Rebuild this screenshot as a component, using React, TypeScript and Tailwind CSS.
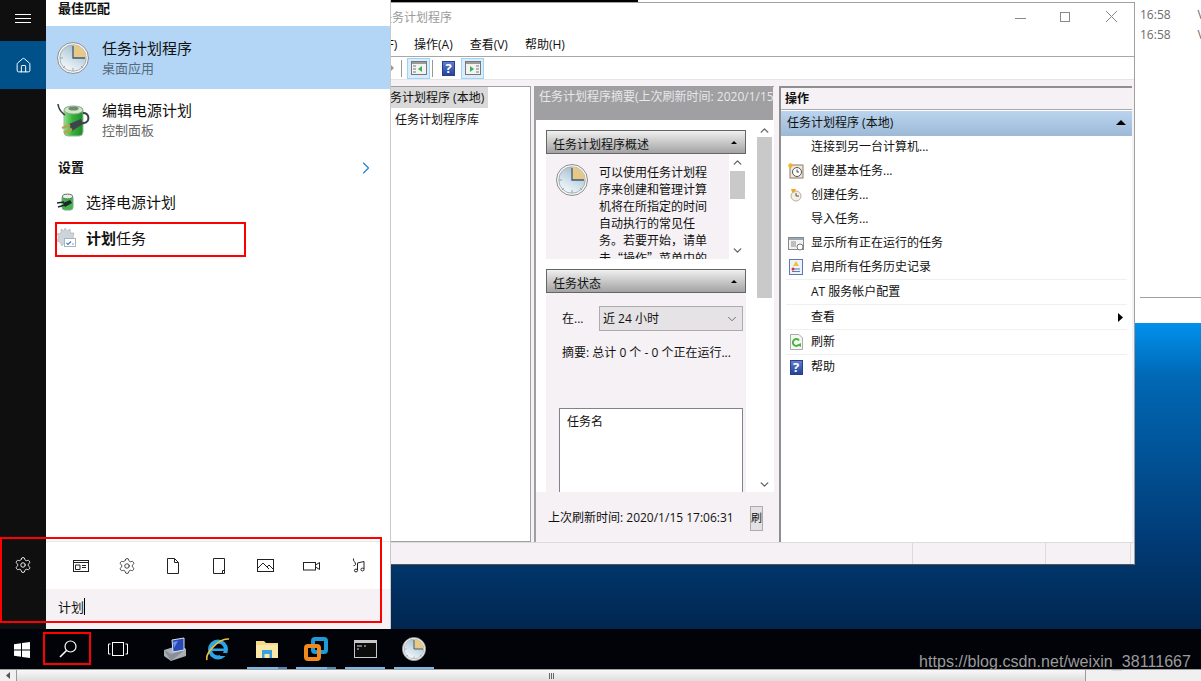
import { Settings, Home, ChevronRight, ChevronUp, ChevronDown } from "lucide-react"

const FONT = "font-['Open_Sans','Noto_Sans_CJK_SC',sans-serif]"

function ClockIcon({ size = 32, id = "face" }: { size?: number; id?: string }) {
  return (
    <svg width={size} height={size} viewBox="0 0 32 32" className="shrink-0">
      <defs>
        <linearGradient id={id} x1="0.1" y1="1" x2="0.6" y2="0.1">
          <stop offset="0" stopColor="#ffffff" />
          <stop offset="0.55" stopColor="#cfdfe9" />
          <stop offset="1" stopColor="#a9c1d1" />
        </linearGradient>
      </defs>
      <circle cx="16" cy="16" r="15.5" fill="#f6f6f6" stroke="#8d8d8d" />
      <circle cx="16" cy="16" r="13.2" fill={`url(#${id})`} stroke="#a8b1b8" />
      <path d="M16 2.8 A13.2 13.2 0 0 1 29.2 16 L16 16 Z" fill="#e6c888" />
      <path d="M16 4 V16 H28" fill="none" stroke="#3d5a76" strokeWidth="1.3" />
      <path d="M16 26 V29 M6 16 H3 M8 24 L6 26 M24 24 L26 26" stroke="#8ea2b2" />
    </svg>
  )
}

function BatteryIcon() {
  return (
    <svg width="34" height="34" viewBox="0 0 34 34" className="shrink-0">
      <defs>
        <linearGradient id="batt" x1="0" y1="0" x2="1" y2="0">
          <stop offset="0" stopColor="#8fe08a" />
          <stop offset="0.45" stopColor="#35b23a" />
          <stop offset="1" stopColor="#1f8a2c" />
        </linearGradient>
      </defs>
      <rect x="7" y="4" width="19" height="29" rx="4" fill="url(#batt)" stroke="#9bb89b" />
      <ellipse cx="16.5" cy="7" rx="9.5" ry="4" fill="#cfe9c8" stroke="#8fa98f" />
      <ellipse cx="16.5" cy="5.5" rx="5" ry="2" fill="#6f8a70" />
      <path d="M1 1 C2 9 6 10 8 12" fill="none" stroke="#39434b" strokeWidth="1.6" />
      <path d="M26 10 C33 10 33 19 27 20 L22 21" fill="none" stroke="#39434b" strokeWidth="2" />
      <path d="M12 21 L24 16 L26 21 L15 28 Z" fill="#3d454b" />
      <path d="M5 25 L13 22 M7 30 L15 26" stroke="#c79a45" strokeWidth="2.4" />
    </svg>
  )
}

function SmallBattery() {
  return (
    <svg width="18" height="18" viewBox="0 0 18 18" className="shrink-0">
      <rect x="5" y="2" width="11" height="15" rx="3" fill="#3fb84a" stroke="#7fa484" />
      <ellipse cx="10.5" cy="3.5" rx="5" ry="2.4" fill="#e5efe2" stroke="#5f6f60" />
      <path d="M6 10 L13 7 L15 10 L8 14 Z" fill="#20262b" />
      <path d="M0 10 L7 9 M1 14 L8 12" stroke="#20262b" strokeWidth="1.4" />
    </svg>
  )
}

function SchedGear() {
  return (
    <svg width="20" height="20" viewBox="0 0 20 20" className="shrink-0">
      <path
        d="M8 0 L10 3 L13 1 L13.5 5 L17 5 L16 9 L18 11 L15 13 L8 14 L5 18 L3 14 L0 13 L2 9 L0 6 L4 5 L4 1 L7 3 Z"
        fill="#cdd4da"
        stroke="#a5b0ba"
        strokeWidth="0.6"
      />
      <rect x="7.5" y="10.5" width="11" height="8" fill="#fff" stroke="#a8b3bd" />
      <path d="M9.5 15 L11 16.5 L14 13.5" fill="none" stroke="#2f7fd1" strokeWidth="1.1" />
      <path d="M15 16 H17" stroke="#999" />
    </svg>
  )
}

function WinChevron({ up }: { up?: boolean }) {
  const Icon = up ? ChevronUp : ChevronDown
  return <Icon size={13} strokeWidth={2.6} className="text-[#666]" />
}

function Triangle({ size = 5 }: { size?: number }) {
  return (
    <svg width={size * 2} height={size} viewBox="0 0 10 5">
      <path d="M5 0 L10 5 L0 5 Z" fill="#000" />
    </svg>
  )
}

function HelpIcon({ size = 14 }: { size?: number }) {
  return (
    <div
      className="flex items-center justify-center bg-gradient-to-b from-[#5c7fd0] to-[#26439c] text-white font-bold text-[13px] leading-none border border-[#2b3f86]"
      style={{ width: size, height: size + 2 }}
    >
      ?
    </div>
  )
}

function PaneIcon({ flip }: { flip?: boolean }) {
  return (
    <div className="w-[23px] h-[21px] bg-[#d8ecfb] border border-[#9cd3f8] flex items-center justify-center">
      <svg width="16" height="14" viewBox="0 0 16 14">
        <rect x="0.5" y="0.5" width="15" height="13" fill="#f3f3f3" stroke="#777" />
        <rect x="1" y="1" width="14" height="2" fill="#9a9a9a" />
        {flip ? (
          <>
            <path d="M5 5 L9 8 L5 11 Z" fill="#39b54a" />
            <path d="M11 5 H14 M11 8 H14 M11 11 H14" stroke="#777" />
          </>
        ) : (
          <>
            <path d="M11 5 L7 8 L11 11 Z" fill="#39b54a" />
            <path d="M2 5 H5 M2 8 H5 M2 11 H5" stroke="#777" />
          </>
        )}
      </svg>
    </div>
  )
}

const SearchTabs = [
  <svg key="n" width="18" height="14" viewBox="0 0 18 14" fill="none" stroke="#222">
    <rect x="1.5" y="1.5" width="15" height="11" />
    <path d="M1.5 3.5 H16.5 M3.5 6 H8 V10.5 H3.5 Z M10 6.5 H14 M10 8.5 H14" />
  </svg>,
  <Settings key="s" size={18} strokeWidth={1.1} className="text-[#222]" />,
  <svg key="d" width="14" height="16" viewBox="0 0 14 16" fill="none" stroke="#222">
    <path d="M1.5 0.5 H8.5 L12.5 4.5 V15.5 H1.5 Z M8.5 0.5 V4.5 H12.5" />
  </svg>,
  <svg key="t" width="14" height="16" viewBox="0 0 14 16" fill="none" stroke="#222">
    <path d="M1.5 0.5 H12.5 V15.5 H1.5 Z M10.5 15.5 V12.5 H12.5" />
  </svg>,
  <svg key="i" width="17" height="13" viewBox="0 0 17 13" fill="none" stroke="#222">
    <rect x="0.5" y="0.5" width="16" height="12" />
    <path d="M1 9 L6 4 L12 10 M10 8 L12 6 L16 10" />
  </svg>,
  <svg key="v" width="17" height="10" viewBox="0 0 17 10" fill="none" stroke="#222">
    <rect x="0.5" y="1.5" width="12" height="7.5" />
    <path d="M12.5 4 L16.5 1.5 V8.5 L12.5 6" />
  </svg>,
  <svg key="m" width="15" height="15" viewBox="0 0 15 15" fill="none" stroke="#222">
    <path d="M3.5 0.5 C2.5 3 6 4 5.5 6.5 C5 8 3.5 7.5 3.5 7.5" />
    <path d="M7.5 12 V5 L14 3.5 V11" />
    <ellipse cx="6" cy="12.5" rx="1.6" ry="1.4" />
    <ellipse cx="12.5" cy="11.5" rx="1.6" ry="1.4" />
  </svg>,
]

const actions = [
  { label: "连接到另一台计算机...", h: "h-[24px]" },
  {
    label: "创建基本任务...",
    h: "h-[24px]",
    icon: (
      <svg width="16" height="16" viewBox="0 0 16 16">
        <rect x="2" y="2" width="13" height="13" fill="#f1e9dc" stroke="#8c7b66" />
        <circle cx="9" cy="9" r="4.5" fill="#fff" stroke="#555" />
        <path d="M9 6.5 V9 H11" fill="none" stroke="#444" />
        <circle cx="2.5" cy="2.5" r="2.2" fill="#f5b323" />
      </svg>
    ),
  },
  {
    label: "创建任务...",
    h: "h-[24px]",
    icon: (
      <svg width="16" height="16" viewBox="0 0 16 16">
        <circle cx="8" cy="9" r="5" fill="#f4efe4" stroke="#b9b09f" />
        <path d="M8 6 V9 H11" fill="none" stroke="#555" />
        <path d="M3 2 L8 2 L6 6 L4 5 Z" fill="#efa91d" />
      </svg>
    ),
  },
  { label: "导入任务...", h: "h-[24px]" },
  {
    label: "显示所有正在运行的任务",
    h: "h-[24px]",
    icon: (
      <svg width="16" height="15" viewBox="0 0 16 15">
        <rect x="0.5" y="1.5" width="15" height="12" fill="#f3f3f3" stroke="#8a8a8a" />
        <rect x="1" y="2" width="14" height="2" fill="#9aa7b5" />
        <path d="M3 6 H8 M3 8 H8 M3 10 H8" stroke="#888" />
        <circle cx="12" cy="11" r="3" fill="#fff" stroke="#777" />
      </svg>
    ),
  },
  {
    label: "启用所有任务历史记录",
    h: "h-[25px] border-b border-[#f0f0f0]",
    icon: (
      <svg width="14" height="16" viewBox="0 0 14 16">
        <rect x="0.5" y="0.5" width="13" height="15" fill="#eef3fb" stroke="#5b79b5" />
        <path d="M3 10 H11 M3 12.5 H11" stroke="#5b79b5" />
        <path d="M7 2 L10 7 H4 Z" fill="#f2c230" />
        <circle cx="4" cy="10" r="1.5" fill="#d8362b" />
      </svg>
    ),
  },
  { label: "AT 服务帐户配置", h: "h-[25px] border-b border-[#f0f0f0]" },
  { label: "查看", h: "h-[25px] border-b border-[#f0f0f0]", sub: true },
  {
    label: "刷新",
    h: "h-[25px] border-b border-[#f0f0f0]",
    icon: (
      <svg width="13" height="16" viewBox="0 0 13 16">
        <path d="M0.5 0.5 H9 L12.5 4 V15.5 H0.5 Z" fill="#f6f6f6" stroke="#aaa" />
        <path d="M9 10.5 A3.4 3.4 0 1 1 9 6.5" fill="none" stroke="#46b93c" strokeWidth="2" />
        <path d="M7 11 L11 13 L11 9 Z" fill="#46b93c" />
      </svg>
    ),
  },
  { label: "帮助", h: "h-[24px]", icon: <HelpIcon size={13} /> },
]

function TaskWindow() {
  return (
    <div className="absolute left-[300px] top-[2px] w-[835px] h-[563px] flex flex-col bg-white border border-[#a0a0a0] border-b-[#555] text-[12px] text-[#111]">
      <div className="h-[31px] shrink-0 flex pl-[79px]">
        <span className="pt-[6px] text-[#9a9a9a]">任务计划程序</span>
        <div className="ml-auto flex items-start pt-[7px] pr-[16px] text-[#888]">
          <div className="w-[11px] h-px bg-[#888] mt-[8px]" />
          <div className="w-[10px] h-[10px] border border-[#888] mt-[2px] ml-[34px]" />
          <svg width="13" height="13" viewBox="0 0 13 13" className="ml-[35px]" stroke="#888" fill="none">
            <path d="M1 1 L12 12 M12 1 L1 12" />
          </svg>
        </div>
      </div>
      <div className="h-[23px] shrink-0 border-b border-[#a8a8a8] flex items-center gap-[17px] pl-[59px]">
        <span className="w-[37px] whitespace-nowrap">文件(F)</span>
        <span>操作(A)</span>
        <span>查看(V)</span>
        <span>帮助(H)</span>
      </div>
      <div className="h-[23px] shrink-0 border-b border-[#e4e4e4] flex items-center pl-[90px]">
        <svg width="4" height="8" viewBox="0 0 4 8" className="-ml-[1px] mr-[1px]">
          <path d="M0 0 L4 4 L0 8 Z" fill="#999" />
        </svg>
        <div className="w-px h-[17px] bg-[#999] ml-[6px] mr-[5px]" />
        <PaneIcon />
        <div className="w-px h-[17px] bg-[#999] ml-[2px] mr-[9px]" />
        <HelpIcon size={13} />
        <div className="w-[6px]" />
        <PaneIcon flip />
      </div>
      <div className="h-[6px] shrink-0 bg-[#f5f1f5]" />
      <div className="h-[456px] shrink-0 flex bg-[#f5f1f5] text-[12px]">
        <div className="w-[230px] shrink-0 bg-white border border-l-0 border-[#a0a0a0]">
          <div className="h-[21px] w-[187px] pl-[77px] bg-[#d9d9d9] flex items-center whitespace-nowrap">任务计划程序 (本地)</div>
          <div className="pl-[94px] pt-[3px]">任务计划程序库</div>
        </div>
        <div className="w-[3px] shrink-0" />
        <div className="w-[240px] shrink-0 border-l-2 border-[#a0a0a0] border-t border-t-[#a0a0a0] flex flex-col">
          <div className="h-[33px] shrink-0 w-[237px] bg-[#a09fa1] text-[#e9e7e9] pl-[3px] pt-[1px] whitespace-nowrap overflow-hidden">
            任务计划程序摘要(上次刷新时间: 2020/1/15 17:06:31)
          </div>
          <div className="h-[372px] shrink-0 flex bg-white overflow-hidden">
            <div className="w-[221px] shrink-0 pl-[10px] pt-[10px] pr-[11px]">
              <div className="h-[24px] bg-gradient-to-b from-[#f0f0f0] to-[#a3a3a3] border border-[#666] flex items-center justify-between pl-[6px] pr-[8px]">
                <span className="pt-[6px]">任务计划程序概述</span>
                <Triangle size={3} />
              </div>
              <div className="h-[105px] bg-[#f5f1f5] flex overflow-hidden">
                <div className="pl-[10px] pt-[10px] pr-[11px]">
                  <ClockIcon id="face2" />
                </div>
                <div className="w-[130px] pt-[10px] leading-[17px]">
                  <div>可以使用任务计划程</div>
                  <div>序来创建和管理计算</div>
                  <div>机将在所指定的时间</div>
                  <div>自动执行的常见任</div>
                  <div>务。若要开始，请单</div>
                  <div className="font-['Noto_Sans_CJK_SC',sans-serif] whitespace-nowrap">击“操作”菜单中的</div>
                </div>
                <div className="w-[17px] shrink-0 bg-white flex flex-col items-center">
                  <div className="h-[17px] flex items-center">
                    <WinChevron up />
                  </div>
                  <div className="w-[15px] h-[28px] bg-[#c9c9c9]" />
                  <div className="mt-auto h-[17px] flex items-center">
                    <WinChevron />
                  </div>
                </div>
              </div>
              <div className="h-[10px]" />
              <div className="h-[24px] bg-gradient-to-b from-[#f0f0f0] to-[#a3a3a3] border border-[#666] flex items-center justify-between pl-[6px] pr-[8px]">
                <span className="pt-[6px]">任务状态</span>
                <Triangle size={3} />
              </div>
              <div className="h-[199px] bg-[#f5f1f5] pl-[16px] pr-[3px] relative">
                <div className="flex items-center pt-[13px]">
                  <span className="w-[37px]">在...</span>
                  <div className="flex-1 h-[25px] bg-[#e6e3e6] border border-[#acacac] flex items-center justify-between pl-[3px] pr-[3px]">
                    <span>近 24 小时</span>
                    <ChevronDown size={14} strokeWidth={1.4} className="text-[#555]" />
                  </div>
                </div>
                <div className="pt-[13px] whitespace-nowrap">摘要: 总计 0 个 - 0 个正在运行...</div>
                <div className="mt-[46px] ml-[-3px] h-[91px] bg-white border border-[#82828c] pl-[7px] pt-[4px]">任务名</div>
              </div>
            </div>
            <div className="w-[15px] shrink-0 flex flex-col items-center">
              <div className="h-[17px] pt-[3px] flex items-center">
                <WinChevron up />
              </div>
              <div className="w-[15px] h-[161px] bg-[#c9c9c9]" />
              <div className="mt-auto h-[15px] pb-[1px] flex items-center">
                <WinChevron />
              </div>
            </div>
          </div>
          <div className="flex-1 flex items-center justify-between pl-[12px] pr-[11px] pt-[2px]">
            <span className="whitespace-nowrap">上次刷新时间: 2020/1/15 17:06:31</span>
            <div className="w-[13px] h-[25px] bg-[#e3e1e3] border border-[#acacac] overflow-hidden leading-[22px] text-[11px] whitespace-nowrap shrink-0">
              刷新
            </div>
          </div>
        </div>
        <div className="w-[5px] shrink-0" />
        <div className="w-[353px] shrink-0 border-l-2 border-t-2 border-[#8f8f8f] flex flex-col bg-white">
          <div className="h-[20px] bg-[#f5f1f5] border-b border-[#a8a8a8] box-content pl-[4px] pt-[1px] flex items-center font-bold">操作</div>
          <div className="h-[25px] mt-[1px] bg-gradient-to-b from-[#bad4ee] to-[#9cb9d6] flex items-center justify-between pl-[6px] pr-[6px] pb-[2px]">
            <span>任务计划程序 (本地)</span>
            <Triangle size={5} />
          </div>
          <div className="pl-[5px] pr-[5px] -mt-[1px]">
            {actions.map((a) => (
              <div key={a.label} className={`${a.h} flex items-center`}>
                <div className="w-[26px] shrink-0 flex justify-center -ml-px pr-[4px]">{a.icon}</div>
                <span>{a.label}</span>
                {a.sub && (
                  <svg width="5" height="9" viewBox="0 0 5 9" className="ml-auto mr-[4px]">
                    <path d="M0 0 L5 4.5 L0 9 Z" fill="#000" />
                  </svg>
                )}
              </div>
            ))}
          </div>
        </div>
      </div>
      <div className="flex-1 flex bg-[#f5f1f5] border-t border-[#dcdcdc]">
        <div className="w-[612px] border-r border-[#dcdcdc]" />
        <div className="w-[133px] border-r border-[#dcdcdc]" />
        <div className="w-[85px] border-r border-[#dcdcdc]" />
      </div>
    </div>
  )
}

function StartMenu() {
  return (
    <div className="absolute left-0 top-0 w-[391px] h-[629px] flex border-r border-[#c9c9c9]">
      <div className="w-[46px] shrink-0 bg-[#0f0f0f] flex flex-col items-stretch text-white">
        <div className="h-[41px] flex flex-col items-center justify-center gap-[3px] pb-[5px]">
          <div className="w-[16px] h-px bg-white" />
          <div className="w-[16px] h-px bg-white" />
          <div className="w-[16px] h-px bg-white" />
        </div>
        <div className="h-[48px] bg-[#00508a] flex items-center justify-center">
          <Home size={17} strokeWidth={1.4} />
        </div>
        <div className="mt-auto h-[73px] flex justify-center">
          <Settings size={18} strokeWidth={1.2} />
        </div>
      </div>
      <div className="flex-1 bg-white flex flex-col text-[#111] relative">
        <div className="h-[26px] pl-[12px] text-[13px] font-bold leading-[17px]">最佳匹配</div>
        <div className="h-[63px] bg-[#b3d6f6] flex items-center pl-[11px] gap-[13px]">
          <ClockIcon />
          <div className="pt-[1px]">
            <div className="text-[15px] leading-[20px]">任务计划程序</div>
            <div className="text-[13px] leading-[20px] text-[#566a7e]">桌面应用</div>
          </div>
        </div>
        <div className="h-[62px] flex items-center pl-[11px] gap-[13px]">
          <BatteryIcon />
          <div className="-ml-[2px]">
            <div className="text-[15px] leading-[20px]">编辑电源计划</div>
            <div className="text-[13px] leading-[20px] text-[#666]">控制面板</div>
          </div>
        </div>
        <div className="h-[34px] pl-[12px] pr-[14px] flex items-center justify-between font-bold text-[13px]">
          <span>设置</span>
          <ChevronRight size={20} strokeWidth={1.3} className="text-[#1a7fd4]" />
        </div>
        <div className="h-[34px] flex items-center pl-[11px] gap-[11px] text-[15px]">
          <SmallBattery />
          <span>选择电源计划</span>
        </div>
        <div className="h-[38px] flex items-center pl-[11px] gap-[9px] text-[15px]">
          <SchedGear />
          <span>
            <b>计划</b>任务
          </span>
        </div>
        <div className="mt-auto h-[48px] border-t border-[#e6e6e6] flex items-center pl-[12px]">
          {SearchTabs.map((icon, i) => (
            <div key={i} className="w-[46px] flex justify-center">
              {icon}
            </div>
          ))}
        </div>
        <div className="h-[40px] bg-[#f5f1f5] pl-[12px] flex items-start pt-[9px] text-[13px]">
          <span>计划</span>
          <span className="w-px h-[17px] bg-black" />
        </div>
      </div>
      <div className="absolute left-[55px] top-[222px] w-[191px] h-[35px] border-2 border-[#f00]" />
      <div className="absolute left-0 top-[537px] w-[382px] h-[86px] border-2 border-[#f00]" />
    </div>
  )
}

function Taskbar() {
  return (
    <div className="h-[40px] shrink-0 bg-[#010308] flex relative">
      <div className="w-[43px] flex items-center justify-center pt-[2px] pl-[1px]">
        <svg width="16" height="16" viewBox="0 0 16 16" fill="#fff">
          <path d="M0 2.2 L7 1.2 V7.5 H0 Z M8 1 L16 0 V7.5 H8 Z M0 8.5 H7 V14.8 L0 13.8 Z M8 8.5 H16 V16 L8 15 Z" />
        </svg>
      </div>
      <div className="w-[48px] my-[3px] mb-[4px] border-2 border-[#f00] flex items-center justify-center">
        <svg width="18" height="18" viewBox="0 0 18 18" fill="none" stroke="#fff" className="ml-[2px]">
          <circle cx="11.5" cy="6.5" r="5.5" strokeWidth="1.2" />
          <path d="M7.5 10.5 L1 17" strokeWidth="1.6" />
        </svg>
      </div>
      <div className="w-[54px] flex items-center justify-center">
        <svg width="20" height="14" viewBox="0 0 20 14" fill="none" stroke="#fff">
          <rect x="4.5" y="0.5" width="11" height="13" />
          <path d="M2.5 2 H0.5 V12 H2.5 M17.5 2 H19.5 V12 H17.5" />
        </svg>
      </div>
      <div className="w-[40px] ml-[10px] flex items-center justify-center">
        <svg width="24" height="24" viewBox="0 0 24 24">
          <path d="M1 13 L17 8 L23 12 L23 19 L8 24 L1 19 Z" fill="#a9afb6" />
          <path d="M1 13 L8 17 L23 12 L8 24 Z" fill="#8a9098" />
          <path d="M9 3 L21 1 L21 13 L10 15 Z" fill="#2648b8" stroke="#e0e3ea" />
          <path d="M10 5 L15 4 L11 11 Z" fill="#6f8fe0" />
        </svg>
      </div>
      <div className="w-[40px] ml-[3px] flex items-center justify-center">
        <svg width="24" height="24" viewBox="0 0 24 24">
          <circle cx="12" cy="12.5" r="8" fill="none" stroke="#2ea6e6" strokeWidth="4" />
          <path d="M6 11.5 H20 V14 H6 Z" fill="#2ea6e6" />
          <path d="M15 16 H21 L20 19 H14 Z" fill="#010308" />
          <path d="M1 23 C-1 17 12 1 23 2" fill="none" stroke="#f1c232" strokeWidth="1.6" />
        </svg>
      </div>
      <div className="w-[40px] ml-[9px] flex items-center justify-center relative">
        <svg width="22" height="20" viewBox="0 0 22 20">
          <path d="M0 2 H8 L10 4 H22 V19 H0 Z" fill="#f5d98a" />
          <path d="M0 6 H22 V19 H0 Z" fill="#fbe7a6" />
          <path d="M6 11 H16 V19 H13.5 V15 H8.5 V19 H6 Z" fill="#3aa0de" />
        </svg>
        <div className="absolute left-0 right-0 bottom-0 h-[2px] flex">
          <div className="w-[31px] bg-[#76b9ed]" />
          <div className="flex-1 bg-[#4f89b8]" />
        </div>
      </div>
      <div className="w-[40px] ml-[9px] flex items-center justify-center relative">
        <svg width="24" height="24" viewBox="0 0 24 24" fill="none" strokeWidth="4">
          <rect x="9" y="2" width="13" height="13" rx="2" stroke="#1f9ad6" />
          <rect x="2" y="9" width="13" height="13" rx="2" stroke="#f18a1c" />
        </svg>
        <div className="absolute left-0 right-0 bottom-0 h-[2px] flex">
          <div className="w-[31px] bg-[#76b9ed]" />
          <div className="flex-1 bg-[#4f89b8]" />
        </div>
      </div>
      <div className="w-[40px] ml-[9px] flex items-center justify-center relative">
        <svg width="23" height="18" viewBox="0 0 23 18">
          <rect x="0.5" y="0.5" width="22" height="17" fill="#0c0c0c" stroke="#c8c8c8" />
          <rect x="1" y="1" width="21" height="2" fill="#c8c8c8" />
          <path d="M3 6 H8 M10 6 H12 M3 9 H5" stroke="#ddd" />
        </svg>
        <div className="absolute left-0 right-0 bottom-0 h-[2px] bg-[#76b9ed]" />
      </div>
      <div className="w-[40px] ml-[9px] flex items-center justify-center relative">
        <ClockIcon size={24} id="face3" />
        <div className="absolute left-0 right-0 bottom-0 h-[2px] bg-[#76b9ed]" />
      </div>
    </div>
  )
}

export default function App() {
  return (
    <div className={`w-[1201px] h-[681px] flex flex-col overflow-hidden relative ${FONT}`}>
      <div className="h-[629px] shrink-0 relative bg-[linear-gradient(to_bottom,#0092ee_51%,#0168b5_60%,#013d78_85%,#012650_100%)]">
        <div className="absolute inset-x-0 top-0 h-[323px] bg-white pl-[1140px] pt-[5px] text-[12px] leading-[20px] text-[#6b6b6b]">
          <div className="flex gap-[27px]">
            <span>16:58</span>
            <span>V</span>
          </div>
          <div className="flex gap-[27px]">
            <span>16:58</span>
            <span>V</span>
          </div>
          <div className="h-px bg-[#a0a0a0] mt-[252px]" />
        </div>
        <div className="absolute left-[391px] top-0 w-[247px] h-[2px] bg-black" />
        <TaskWindow />
        <StartMenu />
      </div>
      <Taskbar />
      <div className="flex-1 bg-[#f0f0f0] border-t border-[#a0a0a0] flex">
        <div className="w-[16px] flex items-center justify-center">
          <svg width="4" height="7" viewBox="0 0 4 7">
            <path d="M4 0 L0 3.5 L4 7 Z" fill="#555" />
          </svg>
        </div>
        <div className="w-[1070px] bg-gradient-to-b from-[#f8f8f8] to-[#dedede] border-l border-r border-[#9a9a9a] flex items-center justify-center gap-px">
          <div className="w-px h-[6px] bg-[#666]" />
          <div className="w-px h-[6px] bg-[#666]" />
          <div className="w-px h-[6px] bg-[#666]" />
        </div>
      </div>
      <div className="absolute left-[919px] top-[652px] text-[16px] tracking-[0.06px] leading-[20px] text-[#9b9b9b] font-['Liberation_Sans',sans-serif] whitespace-nowrap">
        https://blog.csdn.net/weixin_38111667
      </div>
    </div>
  )
}
